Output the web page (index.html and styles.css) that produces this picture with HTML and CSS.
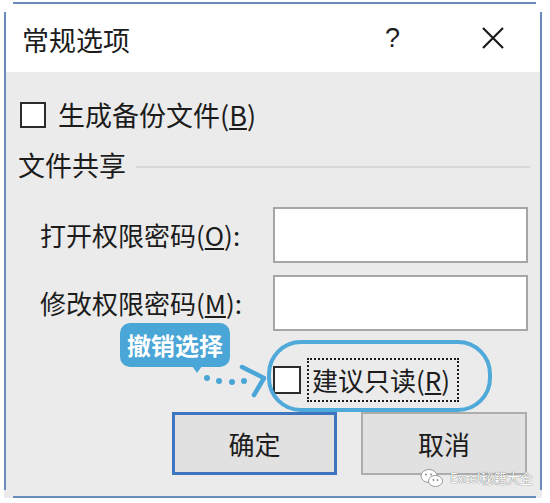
FILE: index.html
```html
<!DOCTYPE html>
<html lang="zh-CN">
<head>
<meta charset="utf-8">
<title>常规选项</title>
<link rel="stylesheet" href="styles.css">
</head>
<body>
<div class="dialog">
  <div class="titlebar">
    <span class="title">常规选项</span>
    <span class="help">?</span>
    <svg class="close" width="24" height="24" viewBox="0 0 24 24"><path d="M2 2 L22 22 M22 2 L2 22" stroke="#1a1a1a" stroke-width="2.2" fill="none"/></svg>
  </div>
  <div class="content">
    <label class="check-row">
      <span class="box"></span>
      <span class="text">生成备份文件(<u>B</u>)</span>
    </label>
    <div class="group">文件共享</div>
    <div class="fields">
      <span class="label">打开权限密码(<u>O</u>):</span>
      <span class="input"></span>
      <span class="label">修改权限密码(<u>M</u>):</span>
      <span class="input"></span>
    </div>
    <div class="readonly-row">
      <span class="box"></span>
      <span class="focus">建议只读(<u>R</u>)</span>
    </div>
    <div class="buttons">
      <span class="btn btn-default">确定</span>
      <span class="btn">取消</span>
    </div>
  </div>

  <div class="callout">撤销选择</div>
  <svg class="pointer" width="72" height="40" viewBox="0 0 72 40">
    <g fill="#4aa6d6">
      <circle cx="7" cy="14" r="3"/>
      <circle cx="19" cy="17" r="3"/>
      <circle cx="32" cy="18" r="3"/>
      <circle cx="44" cy="17" r="3"/>
    </g>
    <polyline points="42,3 64,14 54,31" fill="none" stroke="#4aa6d6" stroke-width="4.5" stroke-linecap="round" stroke-linejoin="round"/>
  </svg>
  <div class="capsule"></div>

  <div class="watermark">
    <svg width="24" height="20" viewBox="0 0 24 20">
      <ellipse cx="9" cy="8" rx="8" ry="6.5" fill="#fff" stroke="#9a9a9a" stroke-width="1"/>
      <ellipse cx="15.5" cy="13" rx="7" ry="5.5" fill="#fff" stroke="#9a9a9a" stroke-width="1"/>
      <circle cx="6" cy="6.5" r="1" fill="#8a8a8a"/>
      <circle cx="11" cy="6.5" r="1" fill="#8a8a8a"/>
      <circle cx="13.5" cy="12" r="0.9" fill="#8a8a8a"/>
      <circle cx="17.5" cy="12" r="0.9" fill="#8a8a8a"/>
    </svg>
    <span>Excel秘籍大全</span>
  </div>
</div>
</body>
</html>
```

FILE: styles.css
```css
html, body {
  margin: 0;
  padding: 0;
  background: #ffffff;
}

body {
  font-family: "Noto Sans CJK SC", "Noto Sans", sans-serif;
  color: #1c1c1c;
}

.dialog {
  position: relative;
  margin: 2px 0 0 4px;
  width: 538px;
  height: 496px;
  display: flex;
  flex-direction: column;
}

.dialog::before {
  content: "";
  position: absolute;
  left: 9px;
  right: 6px;
  top: 0;
  bottom: 0;
  border-top: 2px solid #6a8cbc;
  border-bottom: 2px solid #6a8cbc;
  pointer-events: none;
}

.dialog::after {
  content: "";
  position: absolute;
  left: 0;
  right: 0;
  top: 10px;
  bottom: 8px;
  border-left: 2px solid #6a8cbc;
  border-right: 2px solid #6a8cbc;
  pointer-events: none;
}

.titlebar {
  height: 70px;
  box-sizing: border-box;
  padding: 6px 0 0 18px;
  display: flex;
  align-items: center;
  background: #ffffff;
}

.title {
  font-size: 27px;
  line-height: 30px;
  width: 363px;
}

.help {
  font-family: "Liberation Sans", sans-serif;
  font-size: 27px;
  line-height: 28px;
  width: 96px;
  margin-top: -4px;
}

.close {
  margin-top: -4px;
}

.content {
  flex: 1;
  background: #ebebeb;
  padding: 30px 12px 0 16px;
  display: flex;
  flex-direction: column;
}

.check-row {
  display: flex;
  align-items: center;
  height: 26px;
}

.box {
  width: 26px;
  height: 26px;
  box-sizing: border-box;
  border: 2px solid #2b2b2b;
  background: #ffffff;
  flex: none;
}

.check-row .text {
  margin-left: 12px;
  font-size: 27px;
  line-height: 30px;
}

.group {
  margin-top: 22px;
  height: 30px;
  margin-left: -2px;
  display: flex;
  align-items: center;
  font-size: 27px;
  line-height: 30px;
}

.group::after {
  content: "";
  flex: 1;
  height: 2px;
  background: #d8d8d8;
  margin: 4px 0 0 10px;
}

.fields {
  margin-top: 27px;
  margin-left: 20px;
  display: grid;
  grid-template-columns: 233px 255px;
  grid-auto-rows: 56px;
  row-gap: 12px;
  align-items: center;
}

.label {
  font-size: 26px;
  line-height: 30px;
}

.input {
  height: 56px;
  box-sizing: border-box;
  border: 2px solid #a6a6a6;
  background: #ffffff;
}

.readonly-row {
  margin-top: 27px;
  margin-left: 253px;
  height: 44px;
  display: flex;
  align-items: center;
}

.readonly-row .box {
  width: 28px;
  height: 28px;
}

.focus {
  margin-left: 6px;
  width: 152px;
  height: 44px;
  box-sizing: border-box;
  border: 2px dotted #1a1a1a;
  padding-left: 3px;
  display: flex;
  align-items: center;
  font-size: 26px;
  line-height: 30px;
  white-space: nowrap;
}

.buttons {
  margin-top: 10px;
  margin-left: 152px;
  display: flex;
  gap: 24px;
}

.btn {
  width: 166px;
  height: 63px;
  box-sizing: border-box;
  background: #e1e1e1;
  border: 2px solid #adadad;
  display: flex;
  align-items: center;
  justify-content: center;
  font-size: 26px;
  line-height: 30px;
}

.btn-default {
  width: 165px;
  border: 3px solid #3f74bf;
}

.callout {
  position: absolute;
  left: 116px;
  top: 321px;
  width: 110px;
  height: 44px;
  border-radius: 10px;
  background: #4aa6d6;
  color: #ffffff;
  font-size: 24px;
  font-weight: 700;
  line-height: 44px;
  text-align: center;
}

.callout::after {
  content: "";
  position: absolute;
  left: 72px;
  bottom: -6px;
  border-left: 5px solid transparent;
  border-right: 5px solid transparent;
  border-top: 7px solid #4aa6d6;
}

.pointer {
  position: absolute;
  left: 196px;
  top: 362px;
}

.capsule {
  position: absolute;
  left: 263px;
  top: 338px;
  width: 225px;
  height: 72px;
  box-sizing: border-box;
  border: 4px solid #4fa9d9;
  border-radius: 34px;
}

.watermark {
  position: absolute;
  left: 416px;
  top: 466px;
  display: flex;
  align-items: center;
  gap: 6px;
  color: #ffffff;
  font-size: 13px;
  line-height: 20px;
  text-shadow: 0 0 1px #6a6a6a, 0 0 1px #8a8a8a;
}
```
